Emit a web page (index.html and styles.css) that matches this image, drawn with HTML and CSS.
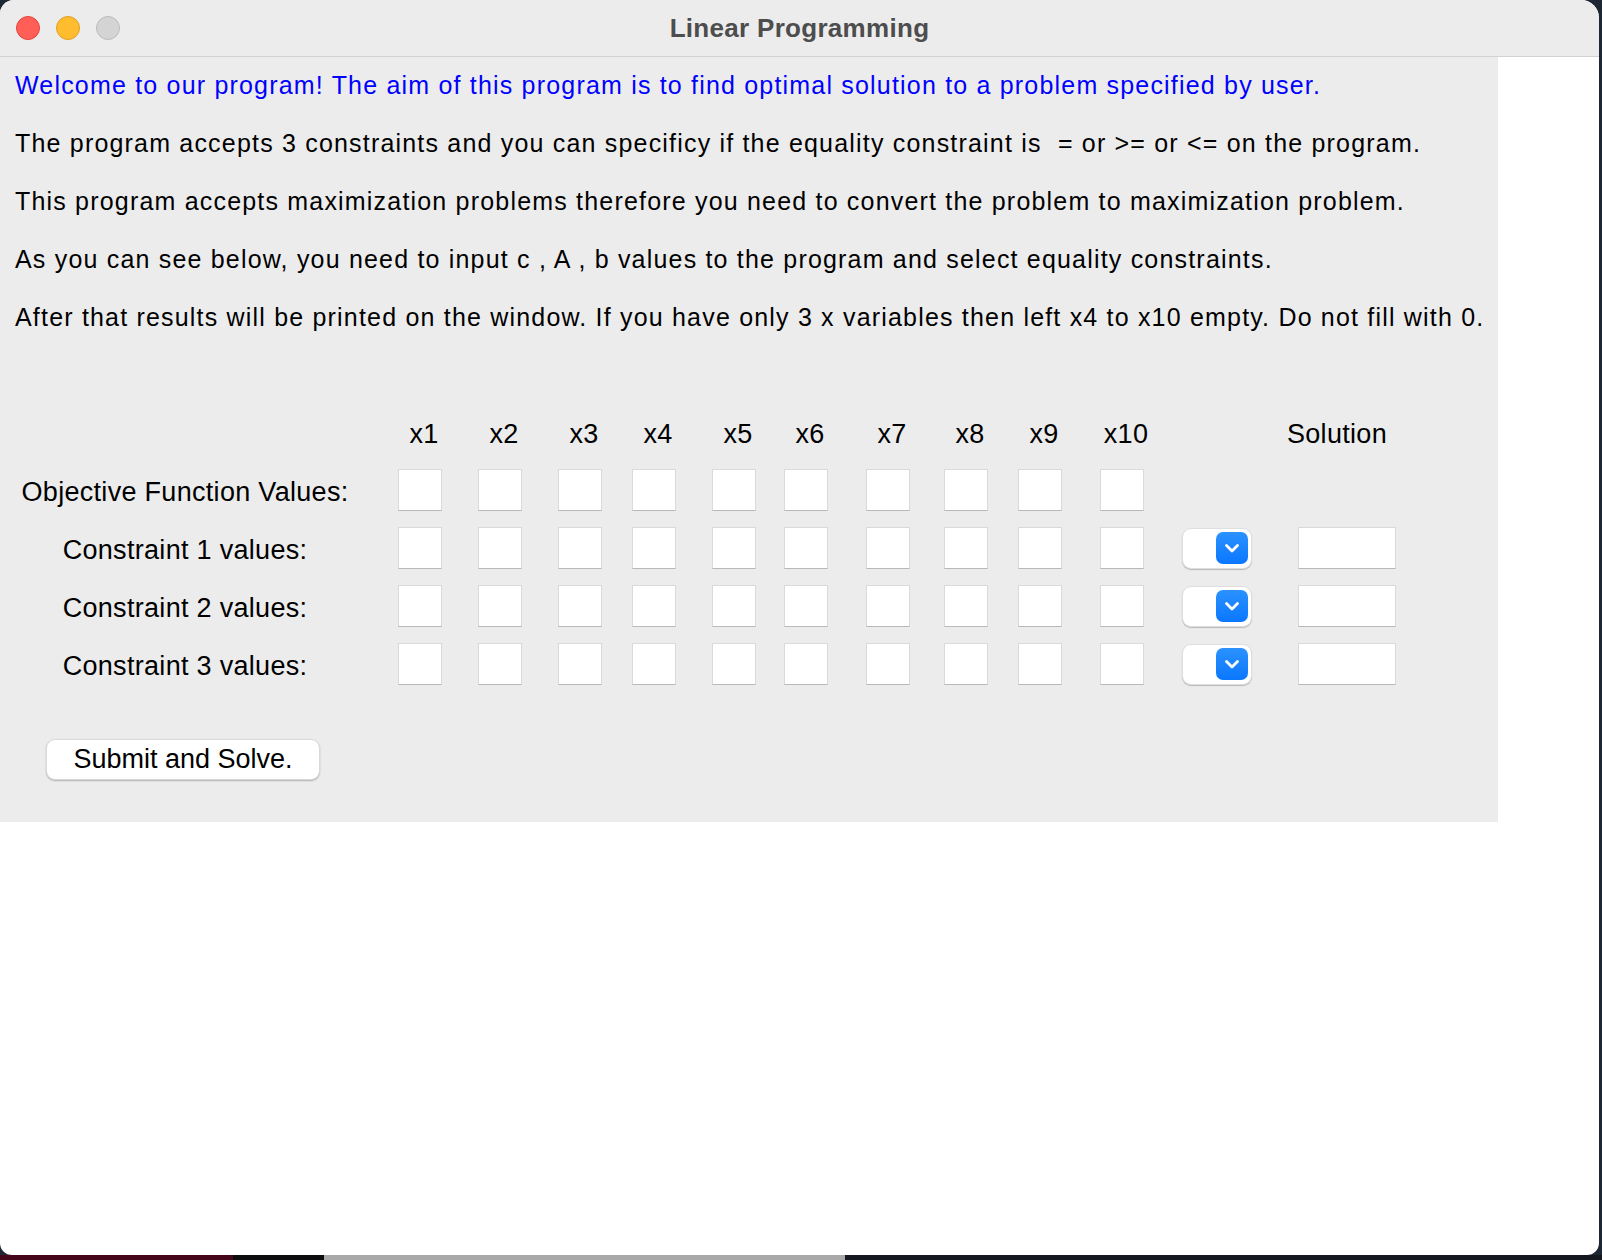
FILE: index.html
```html
<!DOCTYPE html>
<html lang="en">
<head>
<meta charset="utf-8">
<title>Linear Programming</title>
<link rel="stylesheet" href="styles.css">
</head>
<body>
<div class="window">
  <div class="titlebar">
    <div class="lights">
      <span class="light red"></span>
      <span class="light yellow"></span>
      <span class="light gray"></span>
    </div>
    <div class="title">Linear Programming</div>
    <div></div>
  </div>
  <div class="content">
    <div class="intro">
      <p class="line blue">Welcome to our program! The aim of this program is to find optimal solution to a problem specified by user.</p>
      <p class="line">The program accepts 3 constraints and you can specificy if the equality constraint is &nbsp;= or &gt;= or &lt;= on the program.</p>
      <p class="line">This program accepts maximization problems therefore you need to convert the problem to maximization problem.</p>
      <p class="line">As you can see below, you need to input c , A , b values to the program and select equality constraints.</p>
      <p class="line">After that results will be printed on the window. If you have only 3 x variables then left x4 to x10 empty. Do not fill with 0.</p>
    </div>

    <div class="form">
      <div></div>
      <div class="hdr">x1</div><div class="hdr">x2</div><div class="hdr">x3</div><div class="hdr">x4</div><div class="hdr">x5</div>
      <div class="hdr">x6</div><div class="hdr">x7</div><div class="hdr">x8</div><div class="hdr">x9</div><div class="hdr">x10</div>
      <div></div>
      <div class="sol-hdr">Solution</div>

      <div class="label">Objective Function Values:</div>
      <input class="cell"><input class="cell"><input class="cell"><input class="cell"><input class="cell">
      <input class="cell"><input class="cell"><input class="cell"><input class="cell"><input class="cell">
      <div></div><div></div>

      <div class="label">Constraint 1 values:</div>
      <input class="cell"><input class="cell"><input class="cell"><input class="cell"><input class="cell">
      <input class="cell"><input class="cell"><input class="cell"><input class="cell"><input class="cell">
      <div class="select"><span class="select-btn"><svg width="18" height="11" viewBox="0 0 18 11"><path d="M3.5 2.5 L9 8 L14.5 2.5" fill="none" stroke="#fff" stroke-width="2.8" stroke-linecap="round" stroke-linejoin="round"/></svg></span></div>
      <input class="sol">

      <div class="label">Constraint 2 values:</div>
      <input class="cell"><input class="cell"><input class="cell"><input class="cell"><input class="cell">
      <input class="cell"><input class="cell"><input class="cell"><input class="cell"><input class="cell">
      <div class="select"><span class="select-btn"><svg width="18" height="11" viewBox="0 0 18 11"><path d="M3.5 2.5 L9 8 L14.5 2.5" fill="none" stroke="#fff" stroke-width="2.8" stroke-linecap="round" stroke-linejoin="round"/></svg></span></div>
      <input class="sol">

      <div class="label">Constraint 3 values:</div>
      <input class="cell"><input class="cell"><input class="cell"><input class="cell"><input class="cell">
      <input class="cell"><input class="cell"><input class="cell"><input class="cell"><input class="cell">
      <div class="select"><span class="select-btn"><svg width="18" height="11" viewBox="0 0 18 11"><path d="M3.5 2.5 L9 8 L14.5 2.5" fill="none" stroke="#fff" stroke-width="2.8" stroke-linecap="round" stroke-linejoin="round"/></svg></span></div>
      <input class="sol">
    </div>

    <button class="submit">Submit and Solve.</button>
  </div>
</div>
<div class="dock">
  <span class="seg seg-red"></span>
  <span class="seg seg-black"></span>
  <span class="seg seg-gray"></span>
  <span class="seg seg-dark"></span>
</div>
</body>
</html>
```

FILE: styles.css
```css
html, body {
  margin: 0;
  padding: 0;
}

body {
  width: 1602px;
  height: 1260px;
  overflow: hidden;
  background: #1d2633;
  font-family: "Liberation Sans", Arial, Helvetica, sans-serif;
  color: #000;
}

.window {
  width: 1599px;
  height: 1255px;
  background: #ffffff;
  border-radius: 14px 18px 12px 12px;
  overflow: hidden;
  display: flex;
  flex-direction: column;
}

.titlebar {
  height: 56px;
  flex: none;
  background: #ececec;
  border-bottom: 1px solid #d2d2d2;
  display: grid;
  grid-template-columns: 1fr auto 1fr;
  align-items: center;
}

.lights {
  display: flex;
  gap: 16px;
  padding-left: 16px;
}

.light {
  width: 22px;
  height: 22px;
  border-radius: 50%;
  border: 1px solid transparent;
}

.red { background: #ff5f57; border-color: #e2463f; }
.yellow { background: #febc2e; border-color: #dfa023; }
.gray { background: #d4d4d4; border-color: #bcbcbc; }

.title {
  font-size: 26px;
  font-weight: bold;
  color: #4d4d4d;
  letter-spacing: 0.3px;
}

.content {
  width: 1498px;
  background: #ececec;
  padding-bottom: 42px;
}

.intro {
  padding-left: 15px;
  margin-top: -1px;
  padding-bottom: 1px;
}

.line {
  margin: 0;
  font-size: 25px;
  letter-spacing: 1.19px;
  line-height: 58px;
  white-space: nowrap;
}

.blue {
  color: #0000ff;
}

.form {
  margin-top: 56px;
  display: grid;
  grid-template-columns: 398px 80px 80px 74px 80px 72px 82px 78px 74px 82px 82px 105px 120px;
  grid-auto-rows: 58px;
  align-items: center;
  font-size: 27px;
  letter-spacing: 0.3px;
}

.hdr {
  width: 52px;
  padding-top: 4px;
  text-align: center;
  white-space: nowrap;
}

.sol-hdr {
  padding-top: 4px;
  white-space: nowrap;
}

.label {
  text-align: center;
  padding-top: 4px;
  padding-right: 28px;
  white-space: nowrap;
}

.cell,
.sol {
  box-sizing: border-box;
  height: 42px;
  margin: 0;
  padding: 0;
  background: #ffffff;
  border: 1px solid #dadada;
  border-bottom: 1px solid #b9b9b9;
  border-radius: 0;
  outline: none;
}

.cell {
  width: 44px;
}

.sol {
  width: 98px;
  margin-left: 11px;
}

.select {
  box-sizing: border-box;
  width: 70px;
  height: 41px;
  background: #ffffff;
  border-radius: 9px;
  border: 1px solid #dedede;
  box-shadow: 0 1px 1px rgba(0, 0, 0, 0.22);
  display: flex;
  justify-content: flex-end;
  align-items: center;
  padding-right: 3px;
}

.select-btn {
  width: 32px;
  height: 32px;
  border-radius: 7px;
  background: linear-gradient(#2b92ff, #0a77ff);
  display: flex;
  align-items: center;
  justify-content: center;
}

.submit {
  display: block;
  margin: 46px 0 0 46px;
  width: 274px;
  height: 41px;
  box-sizing: border-box;
  background: #ffffff;
  border: 1px solid #d9d9d9;
  border-radius: 9px;
  box-shadow: 0 1px 1.5px rgba(0, 0, 0, 0.25);
  font-family: "Liberation Sans", Arial, Helvetica, sans-serif;
  font-size: 27px;
  color: #000;
  padding: 0;
}

.dock {
  display: flex;
  height: 5px;
}

.seg { display: block; height: 5px; }
.seg-red { width: 233px; background: #43061a; }
.seg-black { width: 91px; background: #0c0c0e; }
.seg-gray { width: 521px; background: #a9a9a9; }
.seg-dark { flex: 1; background: #15191f; }
```
